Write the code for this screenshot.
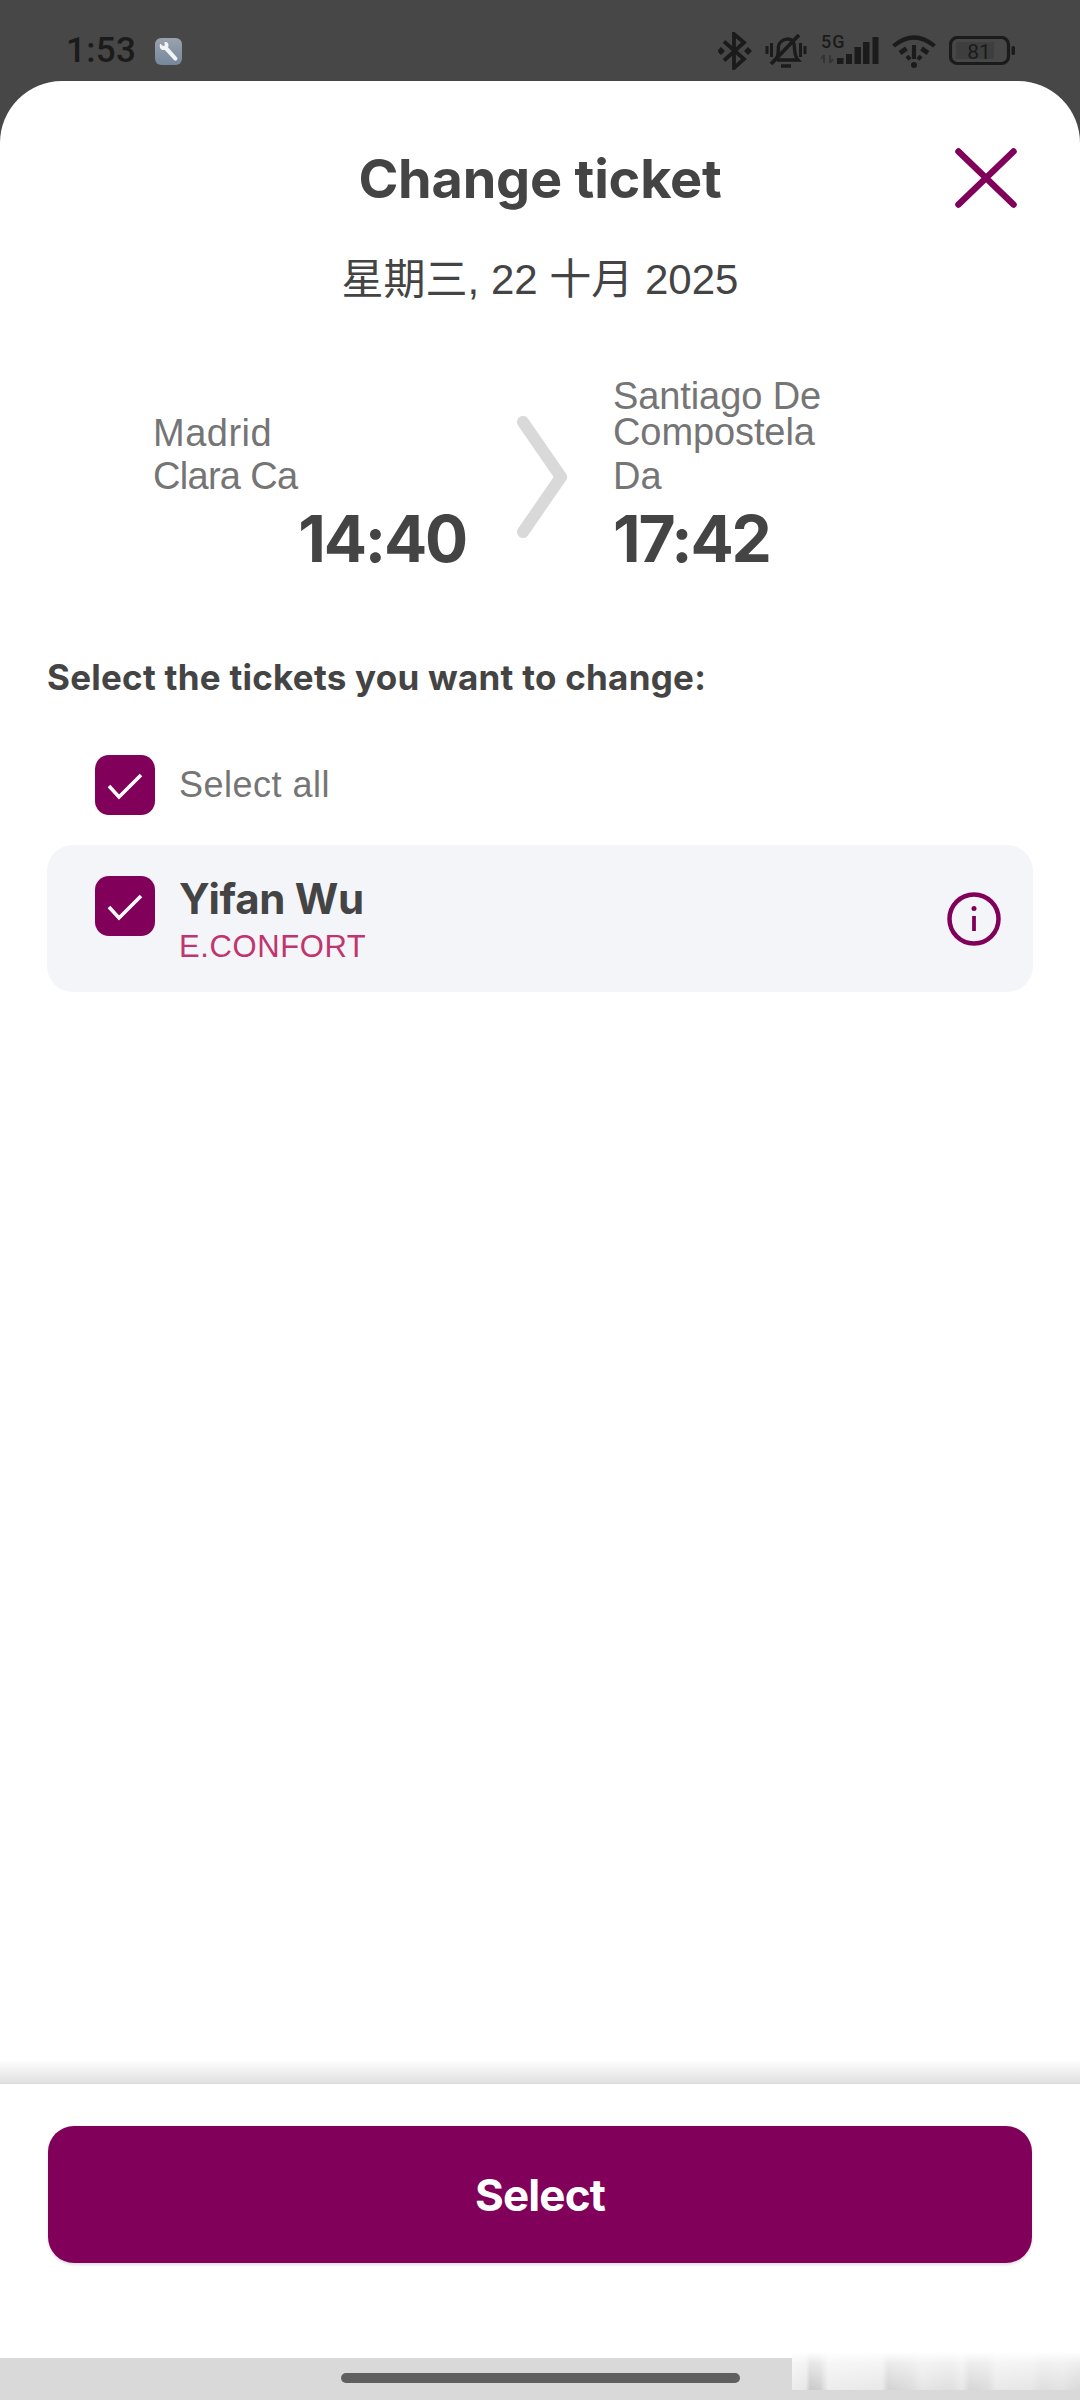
<div class="app">
  <div class="status">
    <span class="clock">1:53</span>
    <svg class="wrench" width="27" height="27" viewBox="0 0 26 26">
      <defs><linearGradient id="wg" x1="0" y1="0" x2="0" y2="1"><stop offset="0" stop-color="#9aa2ad"/><stop offset="1" stop-color="#76879d"/></linearGradient></defs>
      <rect width="26" height="26" rx="6" fill="url(#wg)"/>
      <path d="M5 5.500 L8 8 L9.500 7 L9 4 C12 3 14 6 12.500 9 L21.500 19 C22 21.500 20 22.500 18.500 21.500 L9.500 11.500 C6 12.500 3.500 9 5 5.500Z" fill="#f2f4f6"/>
    </svg>
    <div class="sysicons">
      <svg width="34" height="38" viewBox="0 0 34 38" class="i-bt">
        <path d="M6 9.500 L26 27 L16 36 V2 L26 10.500 L6 28.500" fill="none" stroke="#1b1b1b" stroke-width="3.800"/>
        <path d="M3 15 L7 19 L3 23 L-1 19Z M30 15 L34 19 L30 23 L26 19Z" fill="#1b1b1b"/>
      </svg>
      <svg width="42" height="38" viewBox="0 0 42 38" class="i-bell">
        <path d="M2 14v8 M6.500 11v14 M35.500 11v14 M40 14v8" stroke="#1b1b1b" stroke-width="3" fill="none"/>
        <path d="M11 27 C14 24 13 18 13.500 14 C14.500 8 26 3 29 12 C30 18 29 24 33 28 H12" stroke="#1b1b1b" stroke-width="3.400" fill="none"/>
        <path d="M6 32 L34 3" stroke="#1b1b1b" stroke-width="3.800"/>
        <path d="M16 34 H26" stroke="#1b1b1b" stroke-width="3.400"/>
      </svg>
      <svg width="58" height="38" viewBox="0 0 58 38" class="i-sig">
        <text x="0" y="16" class="fiveg">5G</text>
        <path d="M3 23v8 M0 27l3-4 M9 23v8 M9 31l3-4" stroke="#333" stroke-width="1.800" fill="none"/>
        <path d="M16 26h6.500v6h-6.500z M25 22h6v10h-6z M33.500 15h6.500v17h-6.500z M42 10h6.500v22h-6.500z M51.500 5h6v27h-6z" fill="#1b1b1b"/>
      </svg>
      <svg width="44" height="34" viewBox="0 0 44 34" class="i-wifi">
        <path d="M1.500 11 Q22 -6 42.500 11" fill="none" stroke="#1b1b1b" stroke-width="4.200"/>
        <path d="M8 18 L14.500 13.500 M36 18 L29.500 13.500" fill="none" stroke="#1b1b1b" stroke-width="4.800"/>
        <path d="M15 24 L18 21.500 M29 24 L26 21.500" fill="none" stroke="#1b1b1b" stroke-width="4.800"/>
        <path d="M22 10 V24" stroke="#1b1b1b" stroke-width="4.200"/>
        <circle cx="22" cy="30" r="3" fill="#1b1b1b"/>
      </svg>
      <svg width="66" height="30" viewBox="0 0 66 30" class="i-bat">
        <rect x="1.500" y="1.500" width="58" height="26" rx="7" fill="none" stroke="#1b1b1b" stroke-width="3.200"/>
        <rect x="7" y="6" width="38" height="17" fill="#3e3e3e"/>
        <text x="30" y="22.500" class="batt">81</text>
        <rect x="62.500" y="10" width="3.500" height="9" rx="1.500" fill="#1b1b1b"/>
      </svg>
    </div>
  </div>

  <div class="sheet">
    <div class="head">
      <h1>Change ticket</h1>
      <button class="close" aria-label="Close">
        <svg width="62" height="60" viewBox="0 0 62 60"><path d="M3.500 3.500 L58.500 56.500 M58.500 3.500 L3.500 56.500" stroke="#80005a" stroke-width="6.500" stroke-linecap="round" fill="none"/></svg>
      </button>
    </div>
    <div class="date">星期三, 22 十月 2025</div>

    <div class="route">
      <div class="col from">
        <div class="station">Madrid</div>
        <div class="code">Clara Ca</div>
        <div class="time">14:40</div>
      </div>
      <svg class="chev" width="50" height="122" viewBox="0 0 50 122"><path d="M6 6 L44 61 L6 116" fill="none" stroke="#d9d9d9" stroke-width="12" stroke-linecap="round" stroke-linejoin="round"/></svg>
      <div class="col to">
        <div class="station">Santiago De<br />Compostela</div>
        <div class="code">Da</div>
        <div class="time">17:42</div>
      </div>
    </div>

    <div class="content">
      <h2>Select the tickets you want to change:</h2>
      <div class="all">
        <span class="box"><svg width="60" height="60" viewBox="0 0 60 60"><path d="M14 31 L24 42 L46 20" fill="none" stroke="#fff" stroke-width="3.600"/></svg></span>
        <span class="alltxt">Select all</span>
      </div>
      <div class="card">
        <span class="box"><svg width="60" height="60" viewBox="0 0 60 60"><path d="M14 31 L24 42 L46 20" fill="none" stroke="#fff" stroke-width="3.600"/></svg></span>
        <div class="who">
          <div class="name">Yifan Wu</div>
          <div class="fare">E.CONFORT</div>
        </div>
        <svg class="info" width="54" height="54" viewBox="0 0 54 54">
          <circle cx="27" cy="27" r="24.500" fill="none" stroke="#80005a" stroke-width="4.500"/>
          <circle cx="27" cy="16.500" r="2.500" fill="#80005a"/>
          <path d="M27 24 V39" stroke="#80005a" stroke-width="3.800"/>
        </svg>
      </div>
    </div>

    <div class="fade"></div>
    <div class="footer">
      <button class="cta">Select</button>
    </div>
  </div>

  <div class="nav">
    <div class="pill"></div>
    <div class="smear"></div>
  </div>
</div>

<style>
  :global(body) { margin: 0; background: #fff; }
  * { box-sizing: border-box; }
  .app {
    width: 1080px; height: 2400px; display: flex; flex-direction: column;
    background: #474747; font-family: "Liberation Sans", "Noto Sans CJK SC", sans-serif; color: #444;
  }
  .status { height: 81px; flex: none; display: flex; align-items: flex-start; padding: 32px 65px 0 66px; color: #1b1b1b; }
  .clock { font: 500 35px/38px Roboto, sans-serif; letter-spacing: 0.300px; }
  .wrench { margin: 6px 0 0 19px; }
  .sysicons { margin-left: auto; display: flex; align-items: flex-start; }
  .i-bell { margin-left: 13px; }
  .i-sig { margin-left: 14px; }
  .i-wifi { margin: 3px 0 0 13px; }
  .i-bat { margin: 4px 0 0 13px; }
  .fiveg { font: 500 18px Roboto, sans-serif; fill: #1b1b1b; letter-spacing: 1px; }
  .batt { font: 400 21px Roboto, sans-serif; fill: #1b1b1b; text-anchor: middle; }

  .sheet { flex: 1; display: flex; flex-direction: column; background: #fff; border-radius: 62px 62px 0 0; padding-top: 68px; }
  .head { position: relative; }
  h1 { margin: 0; text-align: center; font: 700 54px/60px Inter, sans-serif; letter-spacing: -0.200px; color: #444; }
  .close { position: absolute; left: 955px; top: -1px; padding: 0; border: 0; background: none; display: block; }
  .close svg { display: block; }
  .date { margin-top: 47px; text-align: center; font-size: 42px; line-height: 48px; color: #444; }

  .route { display: flex; align-items: flex-end; padding-left: 153px; margin-top: 74px; }
  .col { display: flex; flex-direction: column; font-size: 38px; color: #757575; }
  .from { width: 313px; }
  .from .station { line-height: 43px; letter-spacing: 0.500px; }
  .code { line-height: 43px; }
  .from .code { letter-spacing: -0.700px; }
  .to .station { line-height: 36px; letter-spacing: -0.100px; }
  .to .code { margin-top: 5px; }
  .time { margin-top: 5px; font: 700 64px/72px Inter, sans-serif; letter-spacing: -2.200px; color: #444; }
  .from .time { text-align: right; }
  .chev { align-self: center; margin: 0 46px 0 51px; flex: none; }

  .content { padding: 0 47px; }
  h2 { margin: 82px 0 0; font: 700 35px/40px Inter, sans-serif; color: #444; letter-spacing: 0.250px; }
  .all { display: flex; align-items: center; gap: 24px; padding-left: 48px; margin-top: 58px; }
  .alltxt { font-size: 36px; line-height: 42px; color: #757575; letter-spacing: 0.500px; }
  .box { width: 60px; height: 60px; flex: none; background: #80005a; border-radius: 14px; display: block; }
  .box svg { display: block; }
  .card { margin-top: 30px; height: 147px; border-radius: 26px; background: #f4f5f9; display: flex; align-items: flex-start; gap: 24px; padding: 31px 32px 0 48px; }
  .who { margin-top: -1px; }
  .name { font: 700 42px/48px Inter, sans-serif; letter-spacing: -0.300px; color: #444; }
  .fare { margin-top: 6px; font-size: 31px; line-height: 36px; color: #c1356f; letter-spacing: 0.600px; }
  .info { margin: 16px 0 0 auto; }

  .fade { margin-top: auto; height: 24px; flex: none; background: linear-gradient(#ffffff, #e0e0e0); border-bottom: 1px solid #dcdcdc; }
  .footer { flex: none; height: 274px; padding: 42px 48px 0 48px; background: #fff; }
  .cta { width: 100%; height: 137px; border: 0; border-radius: 26px; background: #80005a; color: #fff; font: 700 44px/48px Inter, sans-serif; letter-spacing: -0.900px; display: block; box-shadow: 0 2px 3px rgba(0,0,0,.12); }

  .nav { position: relative; height: 42px; flex: none; background: #d9d9d9; display: flex; justify-content: center; padding-top: 15px; }
  .pill { width: 399px; height: 10px; border-radius: 5px; background: #5f5f5f; }
  .smear {
    position: absolute; left: 792px; right: 0; top: -6px; height: 38px;
    background:
      linear-gradient(rgba(255,255,255,1), rgba(255,255,255,.55) 30%, rgba(255,255,255,0) 100%),
      linear-gradient(90deg, #ececec 0, #e6e6e6 14px, #c9c9c9 18px, #cfcfcf 28px, #ececec 36px, #e8e8e8 90px, #d2d2d2 96px, #dcdcdc 120px, #e6e6e6 130px, #e0e0e0 150px, #dfdfdf 160px, #e8e8e8 170px, #d6d6d6 178px, #dcdcdc 196px, #e9e9e9 204px, #e6e6e6 240px, #dedede 250px, #e2e2e2 270px, #dadada 284px, #d9d9d9 288px);
  }
</style>
